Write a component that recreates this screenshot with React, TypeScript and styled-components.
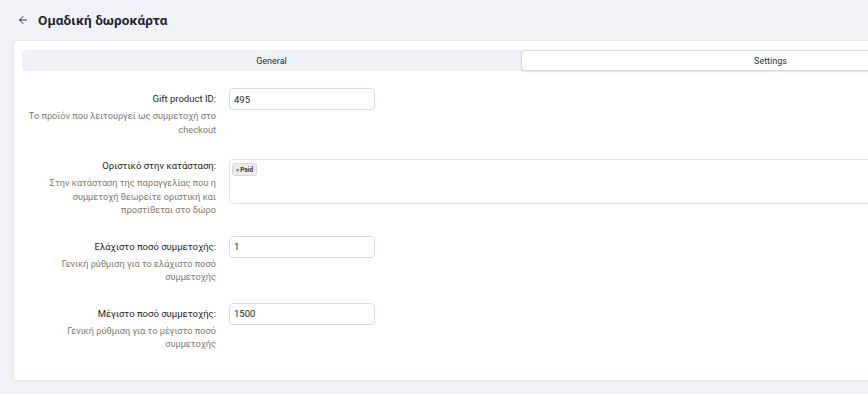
import React, { FunctionComponent } from 'react';
import styled, { createGlobalStyle } from 'styled-components';
import { ArrowLeft } from 'lucide-react';

const GlobalStyle = createGlobalStyle`
    html, body {
        margin: 0;
        padding: 0;
        background-color: #f0f2f7;
        overflow: hidden;
    }
    body {
        font-family: Roboto, "Noto Sans", sans-serif;
    }
`

interface FieldData {
    /** label shown to the left of the control */
    label: string;
    /** helper text below the label */
    help: string;
    /** value of a single line input */
    value?: string;
    /** chips of a multi select */
    chips?: string[];
}

const fields: FieldData[] = [
    { label: 'Gift product ID:', help: 'Το προϊόν που λειτουργεί ως συμμετοχή στο checkout', value: '495' },
    { label: 'Οριστικό στην κατάσταση:', help: 'Στην κατάσταση της παραγγελίας που η συμμετοχή θεωρείτε οριστική και προστίθεται στο δώρο', chips: ['Paid'] },
    { label: 'Ελάχιστο ποσό συμμετοχής:', help: 'Γενική ρύθμιση για το ελάχιστο ποσό συμμετοχής', value: '1' },
    { label: 'Μέγιστο ποσό συμμετοχής:', help: 'Γενική ρύθμιση για το μέγιστο ποσό συμμετοχής', value: '1500' },
];

const Page = styled.div`
    min-width: 1044px;
    min-height: 394px;
    padding: 0 0 0 13px;
    box-sizing: border-box;
`

const TitleBar = styled.div`
    height: 40px;
    display: flex;
    align-items: center;
    gap: 9px;
    padding-left: 4px;
    color: #1f2533;
`

const TitleText = styled.h1`
    margin: 0;
    font-size: 13.5px;
    font-weight: 700;
    letter-spacing: 0.1px;
`

const Card = styled.div`
    width: 1016px;
    background-color: #ffffff;
    border: 1px solid #e3e7ef;
    border-radius: 4px;
    padding: 9px 8px 29px 8px;
    box-sizing: border-box;
`

const TabBar = styled.div`
    display: grid;
    grid-template-columns: 1fr 1fr;
    height: 21px;
    background-color: #eef1f6;
    border-radius: 4px;
    margin-bottom: 17px;
`

const Tab = styled.div<{ active?: boolean }>`
    display: flex;
    align-items: center;
    justify-content: center;
    font-size: 9px;
    color: #2a2f3a;
    border-radius: 4px;
    background-color: ${(p) => (p.active ? '#ffffff' : 'transparent')};
    border: 1px solid ${(p) => (p.active ? '#d5dbe7' : 'transparent')};
    box-shadow: ${(p) => (p.active ? '0 1px 1px rgba(160, 170, 195, 0.35)' : 'none')};
`

const Rows = styled.div`
    display: flex;
    flex-direction: column;
    gap: 19px;
`

const Row = styled.div`
    display: grid;
    grid-template-columns: 194px 1fr;
    column-gap: 13px;
`

const LabelCol = styled.div`
    padding-top: 4px;
    text-align: right;
`

const Label = styled.div`
    font-size: 9.5px;
    line-height: 13px;
    font-weight: 400;
    color: #1e1e1e;
`

const Help = styled.div`
    margin-top: 4px;
    font-size: 9.2px;
    line-height: 13.5px;
    color: #82796f;
`

const Input = styled.div`
    width: 146px;
    height: 22px;
    box-sizing: border-box;
    border: 1px solid #d8dde8;
    border-radius: 4px;
    padding: 0 4px;
    display: flex;
    align-items: center;
    font-size: 9.5px;
    font-weight: 400;
    color: #1e1e1e;
`

const MultiSelect = styled.div`
    margin-top: 4px;
    height: 45px;
    box-sizing: border-box;
    border: 1px solid #dde1ea;
    border-radius: 4px 0 0 4px;
    padding: 3px 2px;
    display: flex;
    align-items: flex-start;
    gap: 3px;
`

const Chip = styled.span`
    display: inline-flex;
    align-items: center;
    gap: 1px;
    height: 13px;
    padding: 0 3px;
    box-sizing: border-box;
    background-color: #eaecf0;
    border: 1px solid #d6d9e0;
    border-radius: 3px;
    font-size: 6.5px;
    font-weight: 700;
    color: #3a3d44;
`

const ChipX = styled.span`
    font-size: 6px;
    color: #666a72;
`

const FieldRow: FunctionComponent<{ field: FieldData }> = ({ field }) => (
    <Row>
        <LabelCol>
            <Label>{field.label}</Label>
            <Help>{field.help}</Help>
        </LabelCol>
        <div>
            {field.chips ? (
                <MultiSelect>
                    {field.chips.map((c) => (
                        <Chip key={c}>
                            <ChipX>×</ChipX>
                            {c}
                        </Chip>
                    ))}
                </MultiSelect>
            ) : (
                <Input>{field.value}</Input>
            )}
        </div>
    </Row>
);

export default function App() {
    return (
        <Page>
            <GlobalStyle />
            <TitleBar>
                <ArrowLeft size={12} strokeWidth={1.8} />
                <TitleText>Ομαδική δωροκάρτα</TitleText>
            </TitleBar>
            <Card>
                <TabBar>
                    <Tab>General</Tab>
                    <Tab active>Settings</Tab>
                </TabBar>
                <Rows>
                    {fields.map((f) => (
                        <FieldRow key={f.label} field={f} />
                    ))}
                </Rows>
            </Card>
        </Page>
    );
}
